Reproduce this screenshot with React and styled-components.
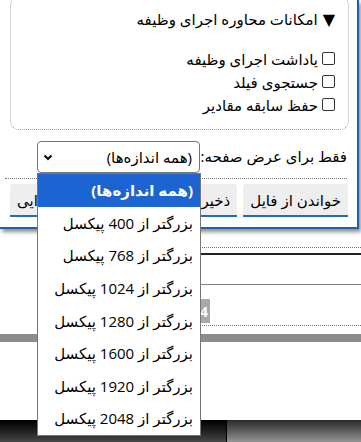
import styled, { createGlobalStyle } from 'styled-components';

const GlobalStyle = createGlobalStyle`
  html, body {
    margin: 0;
    padding: 0;
    overflow: hidden;
    background: #fff;
  }
  body {
    font-family: "Open Sans", "DejaVu Sans", sans-serif;
    color: #000;
  }
`;

const sizes = ['(همه اندازه‌ها)', 400, 768, 1024, 1280, 1600, 1920, 2048];

const checks = ['یاداشت اجرای وظیفه', 'جستجوی فیلد', 'حفظ سابقه مقادیر'];

export default function App() {
  return (
    <Page>
      <GlobalStyle />
      <Underlay>
        <Spacer $h={247} />
        <Rule $kind="dotted" />
        <Spacer $h={5} />
        <Rule $kind="dark" />
        <Spacer $h={29} />
        <Rule $kind="gray" />
        <BadgeRow>
          <Badge>4</Badge>
        </BadgeRow>
        <Rule $kind="dotted" />
        <Spacer $h={8} />
        <Band />
        <Spacer $h={78} />
        <TaskBar>
          <TaskLeft />
          <TaskRight />
        </TaskBar>
      </Underlay>

      <Dialog dir="rtl">
        <OptionsBox>
          <Summary>
            <span>▼</span> امکانات محاوره اجرای وظیفه
          </Summary>
          <CheckList>
            {checks.map(c => (
              <CheckRow key={c}>
                <CheckBox />
                {c}
              </CheckRow>
            ))}
          </CheckList>
        </OptionsBox>

        <FilterRow>
          <FilterLabel>فقط برای عرض صفحه:</FilterLabel>
          <SelectWrap>
            <SelectBox>
              <span>(همه اندازه‌ها)</span>
              <svg width="10" height="7" viewBox="0 0 10 7">
                <path d="M1.5 1.5 L5 5 L8.5 1.5" fill="none" stroke="#111" strokeWidth="2.2" />
              </svg>
            </SelectBox>
            <OptionList>
              {sizes.map((s, i) => (
                <OptionItem key={s} $active={i === 0}>
                  {i === 0 ? s : `بزرگتر از ${s} پیکسل`}
                </OptionItem>
              ))}
            </OptionList>
          </SelectWrap>
        </FilterRow>

        <Divider />

        <ButtonRow>
          <ActionButton>خواندن از فایل</ActionButton>
          <ActionButton>ذخیره در فایل</ActionButton>
          <ActionButton $grow>حالت ابتدایی</ActionButton>
        </ButtonRow>
      </Dialog>
    </Page>
  );
}

const Page = styled.div`
  position: relative;
  width: 361px;
  height: 442px;
  overflow: hidden;
  background: #fff;
`;

const Underlay = styled.div`
  display: flex;
  flex-direction: column;
`;

const Spacer = styled.div`
  height: ${p => p.$h}px;
  flex: none;
`;

const Rule = styled.div`
  margin-left: 190px;
  border-top: ${p =>
    p.$kind === 'dotted'
      ? '1px dotted #777'
      : p.$kind === 'dark'
      ? '2px solid #222'
      : '1px solid #808080'};
`;

const BadgeRow = styled.div`
  height: 40px;
  display: flex;
  align-items: flex-end;
  padding-left: 186px;
  padding-bottom: 2px;
  box-sizing: border-box;
`;

const Badge = styled.div`
  width: 24px;
  height: 24px;
  background: #a9a9a9;
  color: #fff;
  font-size: 14px;
  font-weight: bold;
  display: flex;
  align-items: center;
  justify-content: flex-end;
  padding-right: 2px;
  box-sizing: border-box;
`;

const Band = styled.div`
  height: 8px;
  background: #8c8c8c;
`;

const TaskBar = styled.div`
  height: 23px;
  display: flex;
`;

const TaskLeft = styled.div`
  width: 226px;
  background: linear-gradient(#000 0%, #1a1a1a 40%, #4a4a4a 100%);
  border-right: 1px solid #000;
`;

const TaskRight = styled.div`
  flex: 1;
  background: linear-gradient(#2a2a2a 0%, #5a5a5a 45%, #9a9a9a 100%);
`;

const Dialog = styled.div`
  position: absolute;
  top: 0;
  left: 0;
  width: 359px;
  box-sizing: border-box;
  background: #fff;
  border-right: 2px solid #1f62aa;
  border-bottom: 2px solid #1f62aa;
  box-shadow: 2px 3px 4px rgba(0, 0, 0, 0.45);
  padding: 0 8px 10px 10px;
  display: flex;
  flex-direction: column;
  font-size: 15px;
`;

const OptionsBox = styled.div`
  margin-top: -4px;
  border: 1px solid #d4d4d4;
  border-bottom: 1px dotted #999;
  border-radius: 9px;
  padding: 11px 13px 13px 10px;
`;

const Summary = styled.div`
  height: 22px;
  line-height: 22px;
  span {
    font-size: 16px;
    margin-left: 1px;
  }
`;

const CheckList = styled.div`
  margin-top: 17px;
  display: flex;
  flex-direction: column;
`;

const CheckRow = styled.label`
  height: 23px;
  display: flex;
  align-items: center;
  gap: 4px;
`;

const CheckBox = styled.span`
  width: 11px;
  height: 11px;
  border: 1px solid #333;
  border-radius: 2px;
  background: #fff;
  flex: none;
`;

const FilterRow = styled.div`
  margin-top: 11px;
  display: flex;
  align-items: center;
  padding-right: 2px;
  padding-left: 27px;
`;

const FilterLabel = styled.span`
  flex: 1;
  white-space: nowrap;
  margin-bottom: 3px;
`;

const SelectWrap = styled.div`
  position: relative;
  width: 163px;
  flex: none;
`;

const SelectBox = styled.div`
  height: 32px;
  box-sizing: border-box;
  border: 1px solid #767676;
  border-radius: 4px;
  display: flex;
  align-items: center;
  justify-content: space-between;
  padding: 0 7px 0 5px;
  background: #fff;
`;

const OptionList = styled.div`
  position: absolute;
  top: 100%;
  left: 0;
  right: -1px;
  z-index: 5;
  background: #fff;
  border: 1px solid #767676;
  display: flex;
  flex-direction: column;
`;

const OptionItem = styled.div`
  height: 32.6px;
  display: flex;
  align-items: center;
  padding-right: 7px;
  font-size: 15px;
  background: ${p => (p.$active ? '#1c64d1' : '#fff')};
  color: ${p => (p.$active ? '#fff' : '#000')};
  font-weight: ${p => (p.$active ? 'bold' : 'normal')};
`;

const Divider = styled.div`
  margin: 5px 2px 0 -5px;
  border-top: 1px dotted #777;
`;

const ButtonRow = styled.div`
  margin-top: 5px;
  display: flex;
  gap: 6px;
  padding-right: 1px;
`;

const ActionButton = styled.button`
  flex: ${p => (p.$grow ? '1' : 'none')};
  height: 33px;
  font: inherit;
  font-size: 15px;
  border: none;
  border-bottom: 2px solid #1a6fc5;
  border-radius: 3px 3px 0 0;
  background: #eeeeee;
  padding: 0 7px;
  white-space: nowrap;
  text-align: ${p => (p.$grow ? 'left' : 'center')};
  direction: rtl;
`;
